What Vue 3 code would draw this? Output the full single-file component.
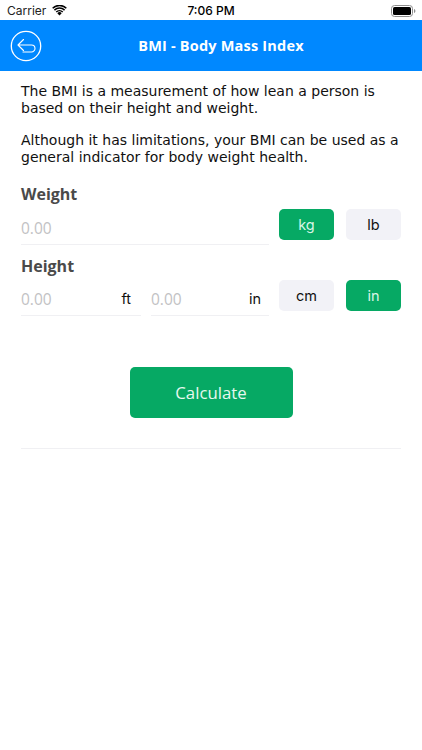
<script setup>
const intro = [
  'The BMI is a measurement of how lean a person is based on their height and weight.',
  'Although it has limitations, your BMI can be used as a general indicator for body weight health.'
]
</script>

<template>
  <div class="screen">
    <div class="status">
      <div class="status-left">
        <span>Carrier</span>
        <svg class="wifi" width="15" height="11" viewBox="0 0 16 12">
          <path d="M8 11.500 5.600 8.900a3.400 3.400 0 0 1 4.800 0Z" fill="#000"/>
          <path d="M3.900 7.100a5.800 5.800 0 0 1 8.200 0l-1.100 1.200a4.200 4.200 0 0 0-6 0Z" fill="#000"/>
          <path d="M1.900 5a8.700 8.700 0 0 1 12.200 0L13 6.200a7.100 7.100 0 0 0-10 0Z" fill="#000"/>
          <path d="M0 2.900a11.500 11.500 0 0 1 16 0l-1.100 1.200a9.900 9.900 0 0 0-13.800 0Z" fill="#000"/>
        </svg>
      </div>
      <span class="time">7:06 PM</span>
      <svg class="battery" width="25" height="12" viewBox="0 0 25 12">
        <rect x="0.500" y="0.500" width="21" height="11" rx="3" fill="none" stroke="#8e8e8e"/>
        <rect x="2" y="2" width="18" height="8" rx="1.600" fill="#000"/>
        <path d="M23 4v4c.8-.3 1.400-1 1.400-2s-.6-1.700-1.400-2Z" fill="#8e8e8e"/>
      </svg>
    </div>

    <header class="nav">
      <svg class="back" width="32" height="32" viewBox="0 0 32 32" fill="none" stroke="#fff">
        <circle cx="16" cy="16" r="14.700" stroke-width="1.300"/>
        <path d="M13.500 9.500 8 15 13.500 20.500M8 15h13.500a3.500 3.500 0 0 1 0 7H13" stroke-width="1.100" stroke-linecap="round" stroke-linejoin="round"/>
      </svg>
      <h1>BMI - Body Mass Index</h1>
    </header>

    <main class="content">
      <p v-for="t in intro" :key="t" class="intro">{{ t }}</p>

      <h2 class="label first">Weight</h2>
      <div class="row">
        <div class="field wide"><span class="ph">0.00</span></div>
        <div class="units">
          <button class="unit on">kg</button>
          <button class="unit">lb</button>
        </div>
      </div>

      <h2 class="label second">Height</h2>
      <div class="row">
        <div class="pair">
          <div class="field"><span class="ph">0.00</span><span class="suffix">ft</span></div>
          <div class="field"><span class="ph">0.00</span><span class="suffix">in</span></div>
        </div>
        <div class="units">
          <button class="unit">cm</button>
          <button class="unit on">in</button>
        </div>
      </div>

      <div class="action">
        <button class="calc">Calculate</button>
      </div>
      <hr class="rule" />
    </main>
  </div>
</template>

<style scoped>
.screen {
  width: 422px;
  height: 750px;
  background: #fff;
  overflow: hidden;
  font-family: "DejaVu Sans", sans-serif;
}
.status {
  height: 20px;
  box-sizing: border-box;
  padding: 1px 6px 0 7px;
  display: flex;
  align-items: center;
  justify-content: space-between;
  position: relative;
  font-family: "Inter", "Liberation Sans", sans-serif;
  font-size: 12px;
  color: #000;
}
.status-left {
  display: flex;
  align-items: center;
  gap: 6px;
  color: #222;
}
.time {
  position: absolute;
  left: 0;
  right: 0;
  text-align: center;
  font-weight: 500;
}
.nav {
  height: 51px;
  background: #0088ff;
  display: flex;
  align-items: center;
  justify-content: center;
  padding-left: 20px;
  box-sizing: border-box;
  position: relative;
}
.back {
  position: absolute;
  left: 10px;
  top: 10px;
}
.nav h1 {
  margin: 0;
  font-size: 14.500px;
  font-weight: 700;
  color: #fff;
  font-family: "Open Sans", sans-serif;
  letter-spacing: 0.2px;
}
.content {
  padding: 12px 21px 0;
}
.intro {
  margin: 0 0 15px;
  font-size: 14px;
  line-height: 17px;
  color: #111;
}
.label {
  margin: 0;
  font-size: 16px;
  line-height: 20px;
  font-weight: 700;
  color: #4a4a4a;
  font-family: "Open Sans", sans-serif;
}
.label.first { margin: 18px 0 1px; }
.label.second { margin-top: 11px; }
.row {
  display: flex;
  align-items: flex-start;
  gap: 10px;
}
.field {
  flex: 1 1 0;
  min-width: 0;
  height: 40px;
  display: flex;
  align-items: center;
  justify-content: space-between;
  border-bottom: 1px solid #f0f0f3;
  box-sizing: border-box;
  padding: 6px 10px 0 0;
}
.pair {
  flex: 1;
  display: flex;
  gap: 10px;
}
.ph {
  font-size: 15.500px;
  color: #c2c2c4;
  font-family: "Open Sans", sans-serif;
}
.suffix {
  font-size: 14.500px;
  color: #111;
  font-family: "Inter", sans-serif;
}
.pair .field + .field {
  padding-right: 8px;
}
.units {
  display: flex;
  gap: 12px;
  margin-top: 4px;
}
.unit {
  width: 55px;
  height: 31px;
  border: 0;
  padding: 0;
  border-radius: 5px;
  background: #f2f2f7;
  color: #111;
  font-family: "Inter", sans-serif;
  font-size: 14.500px;
}
.unit.on {
  background: #06a964;
  color: #d8f5e6;
}
.action {
  display: flex;
  justify-content: center;
  margin-top: 51px;
}
.calc {
  width: 163px;
  height: 51px;
  border: 0;
  border-radius: 5px;
  background: #06a964;
  color: #e6f8ef;
  font-family: "Open Sans", sans-serif;
  font-size: 16.800px;
}
.rule {
  border: 0;
  border-top: 1px solid #f0f0f3;
  margin: 30px 0 0;
}
</style>
